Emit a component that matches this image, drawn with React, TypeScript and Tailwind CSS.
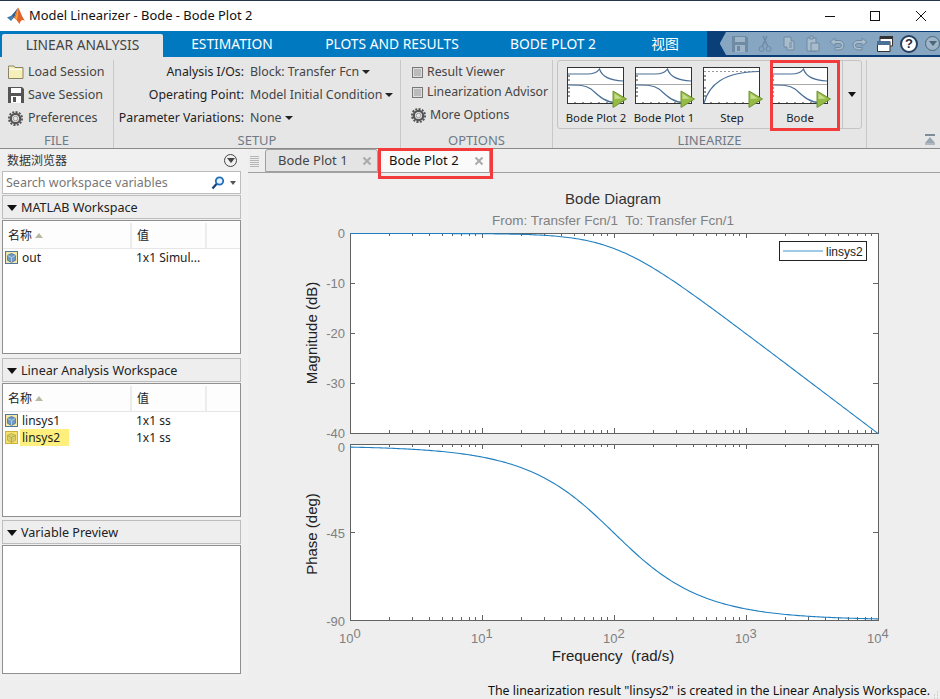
import React from 'react';

const uiFont = "font-['Noto_Sans','Noto_Sans_CJK_SC',sans-serif]";

// Model Linearizer toolstrip + data browser + bode plot

function MatlabLogo() {
  return (
    <svg width="18" height="18" viewBox="0 0 18 18">
      <path d="M0 10.5 L4.5 8.5 L7 10.5 L4 14 Z" fill="#3f7fb5" />
      <path d="M4.5 8.5 L8 4.5 L11 0.5 L7 11 Z" fill="#2c5f8f" />
      <path d="M11 0.5 C13 3 15 10 18 14 C15.5 12.5 14 12.5 12.5 17 C10.5 14 9 12 7 11 Z" fill="#e2622a" />
      <path d="M11 0.5 C10 5 9 9 8 11 L10 13 C11 9 11.5 5 11 0.5 Z" fill="#f5a33c" />
    </svg>
  );
}

function FolderIcon() {
  return (
    <svg width="16" height="14" viewBox="0 0 16 14">
      <path d="M0.5 2.5 L0.5 1 L6 1 L7 2.5 L15 2.5 L15 13.5 L0.5 13.5 Z" fill="#f7efb8" stroke="#8a8466" />
      <path d="M2 4.5 L14 4.5" stroke="#fff" />
    </svg>
  );
}

function SaveIcon({ color = '#555', light = '#fff' }: { color?: string; light?: string }) {
  return (
    <svg width="16" height="16" viewBox="0 0 16 16">
      <path d="M0 0 H14 L16 2 V16 H0 Z" fill={color} />
      <rect x="3" y="1" width="10" height="5" fill={light} />
      <rect x="3" y="9" width="10" height="7" fill={light} />
      <rect x="5" y="10" width="3" height="5" fill={color} />
    </svg>
  );
}

function GearIcon() {
  return (
    <svg width="15" height="15" viewBox="0 0 16 16">
      <circle cx="8" cy="8" r="5" fill="none" stroke="#555" strokeWidth="2.4" />
      <circle cx="8" cy="8" r="7" fill="none" stroke="#555" strokeWidth="2" strokeDasharray="2.2 1.45" />
      <circle cx="8" cy="8" r="2.4" fill="#e8e8e8" stroke="#999" />
    </svg>
  );
}

function CheckBox() {
  return <span className="w-[11px] h-[11px] border border-[#777] bg-[#bbb] shadow-[inset_0_0_0_1px_#ddd] block shrink-0" />;
}

function Caret() {
  return <span className="inline-block ml-[3px] mb-[2px] border-x-[4px] border-x-transparent border-t-[4px] border-t-[#222]" />;
}

function Thumb({ kind }: { kind: 'bode' | 'step' }) {
  return (
    <svg width="60" height="41" viewBox="0 0 60 41" className="block -mr-[2px]">
      <rect x="0.5" y="0.5" width="56" height="36" fill="#fff" stroke="#333" />
      {kind === 'bode' ? (
        <>
          <path d="M1 7 H20 C26 7 30 6 32.5 2 C35 10 42 13.5 56 14" fill="none" stroke="#4b6f96" strokeWidth="1.2" />
          <path d="M1 17.5 H56" stroke="#aaa" />
          <path d="M1 18 C12 18 18 18 24 22 C30 27 36 35 50 36" fill="none" stroke="#4b6f96" strokeWidth="1.2" />
        </>
      ) : (
        <>
          <path d="M1 4.5 H56" stroke="#999" strokeDasharray="2 2" />
          <path d="M1 36 C6 18 20 5 56 4.5" fill="none" stroke="#4b6f96" strokeWidth="1.2" />
        </>
      )}
      <path d="M1 9 H3 M1 13 H3 M1 21 H3 M1 25 H3 M1 29 H3 M8 37 V35 M16 37 V35 M24 37 V35 M32 37 V35 M40 37 V35" stroke="#333" />
      <path d="M46 24 L59.5 32 L46 40.5 Z" fill="#95bb45" stroke="#6f9437" />
      <path d="M47.5 26.5 L55 31.5 L47.5 32 Z" fill="#c6dd8b" />
    </svg>
  );
}

function GalleryItem({ label, kind }: { label: string; kind: 'bode' | 'step' }) {
  return (
    <div className="w-[68px] flex flex-col items-center">
      <Thumb kind={kind} />
      <span className="text-[11.3px] leading-[16px] mt-[2px] text-[#222] whitespace-nowrap">{label}</span>
    </div>
  );
}

function ToolbarIcons() {
  return (
    <div className="flex-1 flex bg-[#0b3f78] pt-[1px] pb-[2px] pl-[13px]">
      <span className="border-y-[11.5px] border-y-transparent border-r-[6px] border-r-[#86a6c2]" />
      <div className="flex-1 bg-[#86a6c2] flex items-center pl-[6px]">
        <SaveIcon color="#6f8aa3" light="#9db4c9" />
        <svg width="16" height="18" viewBox="0 0 16 18" className="ml-[9px]">
          <path d="M10 1 L5 12 M6 1 L11 12" stroke="#6f8aa3" strokeWidth="1.5" />
          <circle cx="4.5" cy="14" r="2.5" fill="none" stroke="#6f8aa3" />
          <circle cx="11.5" cy="14" r="2.5" fill="none" stroke="#6f8aa3" />
        </svg>
        <svg width="16" height="16" viewBox="0 0 16 16" className="ml-[9px]">
          <path d="M2 1 H9 V5 H12 V14 H5 V11 H2 Z" fill="#a9bccc" stroke="#6f8aa3" />
          <path d="M7 7 H10 M7 9 H10 M7 11 H10" stroke="#6f8aa3" />
        </svg>
        <svg width="16" height="18" viewBox="0 0 16 18" className="ml-[7px]">
          <path d="M2 3 H11 V16 H2 Z" fill="#a9bccc" stroke="#6f8aa3" />
          <path d="M5 1 H8 V4 H5 Z M6 8 H14 V16 H6 Z" fill="#a9bccc" stroke="#6f8aa3" />
        </svg>
        <svg width="16" height="16" viewBox="0 0 16 16" className="ml-[8px]">
          <path d="M1 6 L6 2 V4.5 H10 C13 4.5 15 6.5 15 9 C15 12 13 14 10 14 H6 V11.5 H10 C11.5 11.5 12.5 10.5 12.5 9 C12.5 8 11.5 7.5 10 7.5 H6 V10 Z" fill="#a9bccc" stroke="#6f8aa3" />
        </svg>
        <svg width="16" height="16" viewBox="0 0 16 16" className="ml-[7px] -scale-x-100">
          <path d="M1 6 L6 2 V4.5 H10 C13 4.5 15 6.5 15 9 C15 12 13 14 10 14 H6 V11.5 H10 C11.5 11.5 12.5 10.5 12.5 9 C12.5 8 11.5 7.5 10 7.5 H6 V10 Z" fill="#a9bccc" stroke="#6f8aa3" />
        </svg>
        <svg width="16" height="16" viewBox="0 0 16 16" className="ml-[9px]">
          <path d="M3 0.5 H15.5 V10 H3 Z" fill="#fff" stroke="#333" />
          <rect x="3" y="0" width="13" height="3" fill="#333" />
          <path d="M0.5 5.5 H13 V15.5 H0.5 Z" fill="#fff" stroke="#333" />
          <rect x="0" y="5" width="13" height="4" fill="#4c6f95" />
        </svg>
        <span className="ml-[7px] w-[18px] h-[18px] rounded-full bg-white border-2 border-[#27405f] flex items-center justify-center text-[13px] leading-none font-bold text-[#1c2c44] font-['Liberation_Sans',sans-serif] shrink-0">?</span>
        <span className="ml-[7px] w-[15px] h-[15px] rounded-full border border-[#4e6478] bg-[#9db4c9] flex items-center justify-center shrink-0">
          <span className="border-x-[4px] border-x-transparent border-t-[5px] border-t-[#4e6478]" />
        </span>
      </div>
    </div>
  );
}

function SectionLabel({ children }: { children: React.ReactNode }) {
  return <div className="text-center text-[13px] leading-[16px] text-[#6f7a85] h-[16px]">{children}</div>;
}

function Toolstrip() {
  return (
    <div className="h-[92px] bg-[#e6e6e6] flex border-b border-[#8a8a8a] text-[12.5px] text-[#444] shrink-0">
      <section className="w-[114px] flex flex-col border-r border-[#c8c8c8] mt-[3px]">
        <div className="flex-1 flex flex-col pl-[8px] pt-[2px] gap-[3px]">
          <div className="h-[20px] flex items-center gap-[4px]"><FolderIcon />Load Session</div>
          <div className="h-[20px] flex items-center gap-[4px]"><SaveIcon />Save Session</div>
          <div className="h-[20px] flex items-center gap-[5px]"><GearIcon />Preferences</div>
        </div>
        <SectionLabel>FILE</SectionLabel>
      </section>
      <section className="w-[287px] flex flex-col border-r border-[#c8c8c8] mt-[3px]">
        <div className="flex-1 grid grid-cols-[130px_1fr] gap-x-[6px] auto-rows-[20px] gap-y-[3px] pt-[2px] text-[#222]">
          <span className="text-right leading-[20px] text-[12.3px]">Analysis I/Os:</span>
          <span className="leading-[20px] text-[#444] text-[12.4px] whitespace-nowrap">Block: Transfer Fcn<Caret /></span>
          <span className="text-right leading-[20px] text-[12.3px]">Operating Point:</span>
          <span className="leading-[20px] text-[#444] text-[12.4px] whitespace-nowrap">Model Initial Condition<Caret /></span>
          <span className="text-right leading-[20px] text-[12.3px] whitespace-nowrap">Parameter Variations:</span>
          <span className="leading-[20px] text-[#444] text-[12.4px] whitespace-nowrap">None<Caret /></span>
        </div>
        <SectionLabel>SETUP</SectionLabel>
      </section>
      <section className="w-[152px] flex flex-col border-r border-[#c8c8c8] mt-[3px]">
        <div className="flex-1 flex flex-col pl-[11px] pt-[2px] text-[12.3px] whitespace-nowrap">
          <div className="h-[20px] flex items-center gap-[4px]"><CheckBox />Result Viewer</div>
          <div className="h-[20px] flex items-center gap-[4px]"><CheckBox />Linearization Advisor</div>
          <div className="h-[22px] mt-[2px] flex items-center gap-[4px] -ml-[1px]"><GearIcon />More Options</div>
        </div>
        <SectionLabel>OPTIONS</SectionLabel>
      </section>
      <section className="w-[314px] flex flex-col border-r border-[#c8c8c8] mt-[3px] relative">
        <div className="flex-1 pl-[4px]">
          <div className="w-[305px] h-[69px] border border-[#c4c4c4] rounded-[3px] flex">
            <div className="w-[285px] border-r border-[#c4c4c4] flex pl-[4px] pt-[6px]">
              <GalleryItem label="Bode Plot 2" kind="bode" />
              <GalleryItem label="Bode Plot 1" kind="bode" />
              <GalleryItem label="Step" kind="step" />
              <GalleryItem label="Bode" kind="bode" />
            </div>
            <div className="flex-1 flex items-center justify-center">
              <span className="border-x-[4px] border-x-transparent border-t-[5px] border-t-[#111]" />
            </div>
          </div>
        </div>
        <SectionLabel>LINEARIZE</SectionLabel>
        <span className="absolute left-[217px] top-0 w-[70px] h-[71px] border-[3px] border-[#f33b3b]" />
      </section>
      <div className="flex-1 relative">
        <div className="absolute right-[5px] bottom-[3px] flex flex-col items-center">
          <span className="w-[10px] h-[2px] bg-[#7d8c99]" />
          <span className="mt-[1px] border-x-[5px] border-x-transparent border-b-[6px] border-b-[#9aa6b0]" />
          <span className="w-[10px] h-[2px] bg-[#b0b9c1]" />
        </div>
      </div>
    </div>
  );
}

function CubeIcon({ hot }: { hot?: boolean }) {
  return (
    <span className={`w-[13px] h-[13px] border flex items-center justify-center shrink-0 ${hot ? 'bg-[#f7e36b] border-[#c9b53a]' : 'bg-[#f3e8a8] border-[#52779e]'}`}>
      <svg width="9" height="10" viewBox="0 0 10 11">
        <path d="M5 0.5 L9.5 2.5 V8 L5 10.5 L0.5 8 V2.5 Z" fill={hot ? '#d9cc6a' : '#6f9bc6'} stroke={hot ? '#a89c40' : '#2f5f8f'} strokeWidth="0.7" />
        <path d="M0.5 2.5 L5 5 L9.5 2.5 M5 5 V10.5" fill="none" stroke={hot ? '#a89c40' : '#dbe8f3'} strokeWidth="0.7" />
      </svg>
    </span>
  );
}

function SectionHeader({ title }: { title: string }) {
  return (
    <div className="h-[24px] mx-[2px] pt-[2px] bg-[#eeeeee] border border-[#bdbdbd] flex items-center pl-[4px] gap-[4px] text-[12.6px] text-[#222] shrink-0">
      <span className="border-x-[5px] border-x-transparent border-t-[6px] border-t-[#111]" />
      {title}
    </div>
  );
}

function WorkspaceTable({ rows }: { rows: { name: string; value: string; hot?: boolean }[] }) {
  return (
    <div className="h-[134px] mx-[2px] mt-[1px] border border-[#8f8f8f] bg-white text-[12px] text-[#222] shrink-0">
      <div className="h-[28px] pt-[2px] grid grid-cols-[129px_75px_1fr] bg-[#fdfdfd] border-b border-[#e6e6e6]">
        <div className="border-r-2 border-[#ececec] flex items-center pl-[5px] gap-[3px]">
          名称
          <span className="border-x-[4px] border-x-transparent border-b-[5px] border-b-[#b9b8a5]" />
        </div>
        <div className="border-r-2 border-[#ececec] flex items-center pl-[5px]">值</div>
        <div />
      </div>
      {rows.map((row) => (
        <div key={row.name} className="h-[17px] flex items-center pl-[2px]">
          <CubeIcon hot={row.hot} />
          <div className="w-[118px] pl-[2px]">
            <span className={`inline-block pl-[2px] pr-[9px] leading-[17px] ${row.hot ? 'bg-[#fff07e]' : ''}`}>{row.name}</span>
          </div>
          <span>{row.value}</span>
        </div>
      ))}
    </div>
  );
}

function DataBrowser() {
  return (
    <aside className="w-[243px] flex flex-col bg-[#f0f0f0] pt-[1px] shrink-0">
      <div className="h-[21px] flex items-center justify-between pl-[7px] pr-[6px] text-[12px] text-[#333]">
        数据浏览器
        <span className="w-[13px] h-[13px] rounded-full border border-[#444] flex items-center justify-center">
          <span className="border-x-[4px] border-x-transparent border-t-[5px] border-t-[#444]" />
        </span>
      </div>
      <div className="h-[23px] mx-[2px] mb-[1px] pt-[1px] border border-[#bdbdbd] bg-white flex items-center pl-[3px] pr-[4px] text-[12.5px] text-[#777] shrink-0">
        <span className="flex-1">Search workspace variables</span>
        <svg width="14" height="14" viewBox="0 0 14 14">
          <circle cx="8.5" cy="5" r="3.7" fill="#e8f2fb" stroke="#1f6fc0" strokeWidth="1.8" />
          <path d="M5.5 8 L1.5 12.5" stroke="#163f7a" strokeWidth="2.2" />
        </svg>
        <span className="ml-[5px] border-x-[3px] border-x-transparent border-t-[4px] border-t-[#555]" />
      </div>
      <SectionHeader title="MATLAB Workspace" />
      <WorkspaceTable rows={[{ name: 'out', value: '1x1 Simul...' }]} />
      <div className="h-[4px]" />
      <SectionHeader title="Linear Analysis Workspace" />
      <WorkspaceTable
        rows={[
          { name: 'linsys1', value: '1x1 ss' },
          { name: 'linsys2', value: '1x1 ss', hot: true },
        ]}
      />
      <div className="h-[3px]" />
      <SectionHeader title="Variable Preview" />
      <div className="h-[129px] mx-[2px] mt-[1px] border border-[#8f8f8f] bg-white shrink-0" />
    </aside>
  );
}

function PlotTab({ label, active }: { label: string; active?: boolean }) {
  return (
    <div
      className={`h-[23px] flex items-center border border-[#a0a0a0] rounded-t-[3px] pr-[5px] ${
        active ? 'w-[112px] pl-[10px] bg-[#fafafa] border-b-0 text-[#111] z-10' : 'w-[113px] pl-[12px] bg-[#e4e4e4] text-[#444]'
      }`}
    >
      <span className="flex-1">{label}</span>
      <svg width="10" height="10" viewBox="0 0 10 10">
        <path d="M1.5 1.5 L8.5 8.5 M8.5 1.5 L1.5 8.5" stroke="#aaa" strokeWidth="2" />
      </svg>
    </div>
  );
}

// chart helpers, coordinates relative to the plot svg (origin 248,174)
const X0 = 102;
const DECADE = 132;
const xOf = (w: number) => X0 + Math.log10(w) * DECADE;

function logTicks() {
  const out: { x: number; major: boolean }[] = [];
  for (let d = 0; d < 4; d++) {
    for (let m = 1; m < 10; m++) out.push({ x: xOf(m * 10 ** d), major: m === 1 });
  }
  out.push({ x: xOf(10000), major: true });
  return out;
}

function curve(fn: (w: number) => number) {
  const pts: string[] = [];
  for (let i = 0; i <= 240; i++) {
    const w = 10 ** (i / 60);
    pts.push(`${xOf(w).toFixed(2)},${fn(w).toFixed(2)}`);
  }
  return 'M' + pts.join(' L');
}

function Axes({ top, bottom, ticks }: { top: number; bottom: number; ticks: number[] }) {
  const right = X0 + 4 * DECADE;
  return (
    <g stroke="#626262" fill="none" shapeRendering="crispEdges">
      <rect x={X0} y={top} width={right - X0} height={bottom - top} fill="#fff" />
      {logTicks().map((t, i) => (
        <path
          key={i}
          d={`M${t.x} ${top} V${top + (t.major ? 5 : 3)} M${t.x} ${bottom} V${bottom - (t.major ? 5 : 3)}`}
        />
      ))}
      {ticks.map((y) => (
        <path key={y} d={`M${X0} ${y} H${X0 + 5} M${right} ${y} H${right - 5}`} />
      ))}
    </g>
  );
}

function BodePlot() {
  const magY = (w: number) => 59.5 - (-10 * Math.log10(1 + (w / 100) ** 2)) * 5;
  const phaseY = (w: number) => 272 + (Math.atan(w / 100) * (180 / Math.PI)) * (174 / 90);
  const labelClass = 'fill-[#808080] text-[13px]';
  return (
    <svg width="692" height="505" viewBox="0 0 692 505" className="block mt-[1px] font-['Liberation_Sans',sans-serif]">
      <text x="365" y="30" textAnchor="middle" className="fill-[#333] text-[15px]">Bode Diagram</text>
      <text x="365" y="51" textAnchor="middle" className="fill-[#808080] text-[13.5px]" xmlSpace="preserve">From: Transfer Fcn/1  To: Transfer Fcn/1</text>

      <Axes top={59} bottom={259} ticks={[109, 159, 209]} />
      <path d={curve(magY)} fill="none" stroke="#1f7fc0" strokeWidth="1.1" />
      <Axes top={270} bottom={446} ticks={[358]} />
      <path d={curve(phaseY)} fill="none" stroke="#1f7fc0" strokeWidth="1.1" />

      <g textAnchor="end" className={labelClass}>
        <text x="97" y="64">0</text>
        <text x="97" y="114">-10</text>
        <text x="97" y="164">-20</text>
        <text x="97" y="214">-30</text>
        <text x="97" y="264">-40</text>
        <text x="97" y="278">0</text>
        <text x="97" y="364">-45</text>
        <text x="97" y="452">-90</text>
      </g>
      {[0, 1, 2, 3, 4].map((d) => (
        <text key={d} x={X0 - 11 + d * DECADE} y="469" className={labelClass}>
          10<tspan dy="-5">{d}</tspan>
        </text>
      ))}

      <text transform="translate(69 159) rotate(-90)" textAnchor="middle" className="fill-[#222] text-[15px]">Magnitude (dB)</text>
      <text transform="translate(69 360) rotate(-90)" textAnchor="middle" className="fill-[#222] text-[15px]">Phase (deg)</text>
      <text x="365" y="487" textAnchor="middle" className="fill-[#222] text-[15px]" xmlSpace="preserve">Frequency  (rad/s)</text>

      <rect x="531.5" y="67.5" width="87" height="19" fill="#fff" stroke="#222" />
      <path d="M535 77 H575" stroke="#7fb8dc" strokeWidth="1.5" />
      <text x="578" y="82" className="fill-[#222] text-[12px]">linsys2</text>
    </svg>
  );
}

export default function App() {
  return (
    <div className={`w-[940px] h-[699px] flex flex-col overflow-hidden bg-[#f0f0f0] ${uiFont}`}>
      {/* title bar */}
      <div className="h-[31px] bg-white border-t border-[#24344d] flex items-center pl-[7px] shrink-0">
        <MatlabLogo />
        <span className="ml-[4px] text-[12.9px] text-[#111]">Model Linearizer - Bode - Bode Plot 2</span>
        <div className="ml-auto flex items-center">
          <svg width="46" height="20" viewBox="0 0 46 20"><path d="M21 10.5 H31" stroke="#111" /></svg>
          <svg width="46" height="20" viewBox="0 0 46 20"><rect x="20.5" y="5.5" width="9" height="9" fill="none" stroke="#111" /></svg>
          <svg width="44" height="20" viewBox="0 0 44 20"><path d="M20 5 L30 15 M30 5 L20 15" stroke="#111" /></svg>
        </div>
      </div>

      {/* ribbon tabs */}
      <div className="h-[26px] bg-[#0079c1] flex items-end text-white text-[13.8px] shrink-0">
        <div className="ml-[2px] w-[161px] h-[23px] bg-[#e6e6e6] rounded-t-[2px] text-[#444] flex items-center justify-center">LINEAR ANALYSIS</div>
        <div className="w-[138px] h-[25px] flex items-center justify-center">ESTIMATION</div>
        <div className="w-[182px] h-[25px] flex items-center justify-center whitespace-nowrap">PLOTS AND RESULTS</div>
        <div className="w-[140px] h-[25px] flex items-center justify-center whitespace-nowrap">BODE PLOT 2</div>
        <div className="w-[84px] h-[25px] flex items-center justify-center">视图</div>
        <div className="flex-1 self-stretch flex"><ToolbarIcons /></div>
      </div>

      <Toolstrip />

      <div className="flex-1 flex min-h-0">
        <DataBrowser />
        <main className="flex-1 flex flex-col min-w-0 relative ml-[5px] bg-[#eeeeee]">
          <div className="h-[24px] flex items-end pl-[2px] border-b border-[#a0a0a0] text-[13px] shrink-0">
            <span className="w-[9px] h-[12px] mb-[5px] mr-[6px] bg-[repeating-linear-gradient(0deg,#b5b5b5_0,#b5b5b5_1px,transparent_1px,transparent_2px)]" />
            <PlotTab label="Bode Plot 1" />
            <PlotTab label="Bode Plot 2" active />
          </div>
          <span className="absolute left-[130px] top-[-1px] w-[115px] h-[31px] border-[3px] border-[#f33b3b] z-20" />
          <BodePlot />
        </main>
      </div>

      {/* status bar */}
      <div className="h-[19px] shrink-0 flex items-center justify-end pr-[1px] pt-[3px] text-[12.4px] text-[#111] bg-[#eeeeee]">
        The linearization result "linsys2" is created in the Linear Analysis Workspace.
        <svg width="7" height="8" viewBox="0 0 7 8" className="ml-[2px] self-end">
          <path d="M5 1 H6 M2 4 H3 M5 4 H6 M2 7 H3 M5 7 H6" stroke="#b5b5b5" />
        </svg>
      </div>
    </div>
  );
}
